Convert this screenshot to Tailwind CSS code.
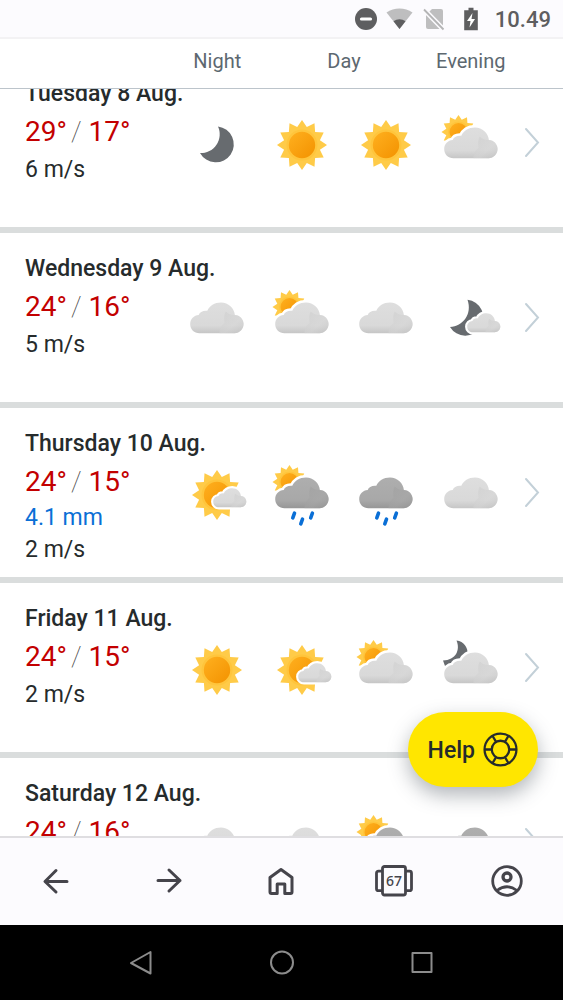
<!DOCTYPE html>
<html lang="en">
<head>
  <meta charset="UTF-8" />
  <meta name="viewport" content="width=device-width, initial-scale=1.0"/>
  <title>10 day forecast</title>
  <script src="https://cdn.jsdelivr.net/npm/@tailwindcss/browser@4"></script>
</head>
<body class="flex h-screen flex-col overflow-hidden bg-white font-[Roboto,sans-serif] text-[#262b2c]">

  <!-- shared weather symbols -->
  <svg class="absolute h-0 w-0" aria-hidden="true">
    <defs>
      <linearGradient id="sunFill" x1="0" y1="0" x2="1" y2="1">
        <stop offset="0" stop-color="#ffb01f"/>
        <stop offset="1" stop-color="#f39200"/>
      </linearGradient>
      <linearGradient id="lightFill" x1="0" y1="0" x2="0" y2="1">
        <stop offset="0" stop-color="#dedede"/>
        <stop offset="0.75" stop-color="#d9d9d9"/>
        <stop offset="1" stop-color="#c6c6c6"/>
      </linearGradient>
      <linearGradient id="lightShade" x1="0" y1="0" x2="1" y2="1">
        <stop offset="0" stop-color="#c9c9c9"/>
        <stop offset="0.6" stop-color="#d6d6d6"/>
        <stop offset="1" stop-color="#c2c2c2"/>
      </linearGradient>
      <linearGradient id="darkFill" x1="0" y1="0" x2="0" y2="1">
        <stop offset="0" stop-color="#aeaeae"/>
        <stop offset="0.75" stop-color="#a8a8a8"/>
        <stop offset="1" stop-color="#979797"/>
      </linearGradient>
      <linearGradient id="darkShade" x1="0" y1="0" x2="1" y2="1">
        <stop offset="0" stop-color="#9c9c9c"/>
        <stop offset="0.6" stop-color="#a6a6a6"/>
        <stop offset="1" stop-color="#939393"/>
      </linearGradient>

      <g id="sunShape">
        <path fill="#ffcb48" d="M0-25 4.8-17.9 12.5-21.7 13.1-13.1 21.7-12.5 17.9-4.8 25 0 17.9 4.8 21.7 12.5 13.1 13.1 12.5 21.7 4.8 17.9 0 25-4.8 17.9-12.5 21.7-13.1 13.1-21.7 12.5-17.9 4.8-25 0-17.9-4.8-21.7-12.5-13.1-13.1-12.5-21.7-4.8-17.9Z"/>
        <circle r="15.5" fill="#ffc53c"/>
        <circle r="13.2" fill="url(#sunFill)"/>
      </g>
      <path id="moonShape" fill="#676b6f" d="M33 15.5A18 18 0 1 1 15 42 18.7 18.7 0 0 0 33 15.5Z"/>
      <path id="cloudShape" d="M14.5 47.2C9.2 47.2 5.2 43.3 5.2 38.2 5.2 33 9 29.4 13.7 29.1 14.6 26.2 17.8 24.4 22.3 24.8 24.4 19.7 29.6 16.4 36 16.4 43.4 16.4 49.3 22 49.9 29 54.8 29.3 58.6 33.2 58.6 38.1 58.6 43.2 54.6 47.2 49.5 47.2Z"/>
      <path id="cloudSide" d="M34.5 47.2C34.5 43 36.5 38.5 39.6 37 38.8 32 39.2 28 40.8 25.6 44 28.6 47 29.2 49.9 29 54.8 29.3 58.6 33.2 58.6 38.1 58.6 43.2 54.6 47.2 49.5 47.2Z"/>
      <g id="lightCloud">
        <use href="#cloudShape" fill="url(#lightFill)"/>
        <use href="#cloudSide" fill="url(#lightShade)" opacity="0.5"/>
      </g>
      <g id="darkCloud">
        <use href="#cloudShape" fill="url(#darkFill)"/>
        <use href="#cloudSide" fill="url(#darkShade)" opacity="0.5"/>
      </g>
      <g id="smallCloud" transform="translate(25 17) scale(0.62)">
        <use href="#cloudShape" fill="#fff" stroke="#fff" stroke-width="7"/>
        <use href="#lightCloud"/>
      </g>
      <g id="cloudGap">
        <use href="#cloudShape" fill="#fff" stroke="#fff" stroke-width="5"/>
      </g>
      <g id="drops" stroke="#0a6fd6" stroke-width="3.6" stroke-linecap="round">
        <path d="M24.5 52.2 22.8 56.8M32.5 58.2 30.8 62.8M42.4 52.2 40.7 56.8"/>
      </g>

      <symbol id="clearDay" viewBox="0 0 64 68"><use href="#sunShape" x="32" y="34"/></symbol>
      <symbol id="clearNight" viewBox="0 0 64 68"><use href="#moonShape"/></symbol>
      <symbol id="cloudy" viewBox="0 0 64 68"><use href="#lightCloud"/></symbol>
      <symbol id="mostlyCloudyDay" viewBox="0 0 64 68">
        <use href="#sunShape" transform="translate(19.5 21) scale(0.68)"/>
        <use href="#cloudGap"/><use href="#lightCloud"/>
      </symbol>
      <symbol id="mostlyCloudyNight" viewBox="0 0 64 68">
        <path fill="#676b6f" d="M17.500 4.500C25 5.500 29 11.500 28.600 18L24 30H6L4 24.500C17 24 21.500 14 17.500 4.500Z"/>
        <use href="#cloudGap"/><use href="#lightCloud"/>
      </symbol>
      <symbol id="partlyCloudyDay" viewBox="0 0 64 68">
        <use href="#sunShape" x="32" y="34"/><use href="#smallCloud"/>
      </symbol>
      <symbol id="partlyCloudyNight" viewBox="0 0 64 68">
        <path fill="#676b6f" d="M28.500 13.800A18 18 0 1 1 11 41C24 40.500 33.500 28 28.500 13.800Z"/>
        <use href="#smallCloud"/>
      </symbol>
      <symbol id="rain" viewBox="0 0 64 68"><use href="#darkCloud"/><use href="#drops"/></symbol>
      <symbol id="rainShowers" viewBox="0 0 64 68">
        <use href="#sunShape" transform="translate(19.5 21) scale(0.68)"/>
        <use href="#cloudGap"/><use href="#darkCloud"/><use href="#drops"/>
      </symbol>
      <symbol id="chevron" viewBox="0 0 16 32"><path d="M2 2 14 15.500 2 29" fill="none" stroke="#c3d0d8" stroke-width="2" stroke-linecap="round"/></symbol>
    </defs>
  </svg>

  <!-- status bar -->
  <div class="flex h-[39px] shrink-0 items-center justify-end border-b-2 border-[#f3f2f4] bg-[#fcfbfe] pr-3 text-[#5e5e60]">
    <svg class="mr-2 h-6 w-6" viewBox="0 0 24 24"><circle cx="12" cy="12" r="11" fill="currentColor"/><path d="M7.5 12h9" stroke="#fff" stroke-width="3.2" stroke-linecap="round"/></svg>
    <svg class="mr-2.5 h-6 w-[27px]" viewBox="0 0 27 24"><path d="M.5 5.5C8 0 19 0 26.500 5.500L13.500 22Z" fill="#bebebf"/><path d="M7.500 14.300C11 11.600 16 11.600 19.500 14.300L13.500 22Z" fill="currentColor"/></svg>
    <svg class="mr-[18px] h-6 w-[22px]" viewBox="0 0 22 24"><path d="M9 2h9q2 0 2 2v18H5q-2 0-2-2V8Z" fill="#bebebf"/><path d="M0 1.500 21 23" stroke="#fcfbfe" stroke-width="5"/><path d="M1 2.500 20.500 22.500" stroke="#b4b4b5" stroke-width="1.800"/></svg>
    <svg class="mr-4 h-6 w-4" viewBox="0 0 16 24"><path d="M5.500.8h5v2.400h4.300V23.200H1.200V3.200h4.300Z" fill="currentColor"/><path d="M9.500 6 4 14h3.500l-1 6.500L12 12H8.500Z" fill="#fff"/></svg>
    <span class="pt-0.5 text-[22px] leading-7 font-medium">10.49</span>
  </div>

  <!-- column titles -->
  <header class="grid h-[50px] shrink-0 grid-cols-[175px_1fr_50px] items-center border-b border-[#bcc4cb] pb-1.5 text-[20px] text-[#5d6870]">
    <div class="col-start-2 grid grid-cols-4 text-center">
      <span>Night</span>
      <span class="col-span-2">Day</span>
      <span>Evening</span>
    </div>
  </header>

  <main class="relative min-h-0 flex-1 overflow-hidden">
    <div class="-mt-[31px] flex flex-col gap-1.5 bg-[#dadddd]">

      <article class="grid min-h-[169px] grid-cols-[175px_1fr_50px] items-center bg-white">
        <div class="self-start pt-[22px] pl-[25px] text-[23px] leading-8 whitespace-nowrap">
          <h2 class="leading-7 font-medium">Tuesday 8 Aug.</h2>
          <p class="mt-1 text-[28px] leading-10 text-[#c30000]">29°<span class="ml-1 font-thin text-[#444]">/</span> 17°</p>
          <p class="mt-0.5">6 m/s</p>
        </div>
        <div class="grid grid-cols-4 justify-items-center pt-1">
          <svg class="h-[68px] w-16" role="img" aria-label="Clear"><use href="#clearNight"/></svg>
          <svg class="h-[68px] w-16" role="img" aria-label="Sunny"><use href="#clearDay"/></svg>
          <svg class="h-[68px] w-16" role="img" aria-label="Sunny"><use href="#clearDay"/></svg>
          <svg class="h-[68px] w-16" role="img" aria-label="Mostly cloudy"><use href="#mostlyCloudyDay"/></svg>
        </div>
        <button class="flex h-full items-center pl-[11px]" aria-label="Open Tuesday"><svg class="h-8 w-4"><use href="#chevron"/></svg></button>
      </article>

      <article class="grid min-h-[169px] grid-cols-[175px_1fr_50px] items-center bg-white">
        <div class="self-start pt-[22px] pl-[25px] text-[23px] leading-8 whitespace-nowrap">
          <h2 class="leading-7 font-medium">Wednesday 9 Aug.</h2>
          <p class="mt-1 text-[28px] leading-10 text-[#c30000]">24°<span class="ml-1 font-thin text-[#444]">/</span> 16°</p>
          <p class="mt-0.5">5 m/s</p>
        </div>
        <div class="grid grid-cols-4 justify-items-center pt-1">
          <svg class="h-[68px] w-16" role="img" aria-label="Cloudy"><use href="#cloudy"/></svg>
          <svg class="h-[68px] w-16" role="img" aria-label="Mostly cloudy"><use href="#mostlyCloudyDay"/></svg>
          <svg class="h-[68px] w-16" role="img" aria-label="Cloudy"><use href="#cloudy"/></svg>
          <svg class="h-[68px] w-16" role="img" aria-label="Partly cloudy"><use href="#partlyCloudyNight"/></svg>
        </div>
        <button class="flex h-full items-center pl-[11px]" aria-label="Open Wednesday"><svg class="h-8 w-4"><use href="#chevron"/></svg></button>
      </article>

      <article class="grid min-h-[169px] grid-cols-[175px_1fr_50px] items-center bg-white">
        <div class="self-start pt-[22px] pl-[25px] text-[23px] leading-8 whitespace-nowrap">
          <h2 class="leading-7 font-medium">Thursday 10 Aug.</h2>
          <p class="mt-1 text-[28px] leading-10 text-[#c30000]">24°<span class="ml-1 font-thin text-[#444]">/</span> 15°</p>
          <p class="text-[#0a6fd6]">4.1 mm</p>
          <p>2 m/s</p>
        </div>
        <div class="grid grid-cols-4 justify-items-center pt-1">
          <svg class="h-[68px] w-16" role="img" aria-label="Partly cloudy"><use href="#partlyCloudyDay"/></svg>
          <svg class="h-[68px] w-16" role="img" aria-label="Rain showers"><use href="#rainShowers"/></svg>
          <svg class="h-[68px] w-16" role="img" aria-label="Rain"><use href="#rain"/></svg>
          <svg class="h-[68px] w-16" role="img" aria-label="Cloudy"><use href="#cloudy"/></svg>
        </div>
        <button class="flex h-full items-center pl-[11px]" aria-label="Open Thursday"><svg class="h-8 w-4"><use href="#chevron"/></svg></button>
      </article>

      <article class="grid min-h-[169px] grid-cols-[175px_1fr_50px] items-center bg-white">
        <div class="self-start pt-[22px] pl-[25px] text-[23px] leading-8 whitespace-nowrap">
          <h2 class="leading-7 font-medium">Friday 11 Aug.</h2>
          <p class="mt-1 text-[28px] leading-10 text-[#c30000]">24°<span class="ml-1 font-thin text-[#444]">/</span> 15°</p>
          <p class="mt-0.5">2 m/s</p>
        </div>
        <div class="grid grid-cols-4 justify-items-center pt-1">
          <svg class="h-[68px] w-16" role="img" aria-label="Sunny"><use href="#clearDay"/></svg>
          <svg class="h-[68px] w-16" role="img" aria-label="Partly cloudy"><use href="#partlyCloudyDay"/></svg>
          <svg class="h-[68px] w-16" role="img" aria-label="Mostly cloudy"><use href="#mostlyCloudyDay"/></svg>
          <svg class="h-[68px] w-16" role="img" aria-label="Mostly cloudy"><use href="#mostlyCloudyNight"/></svg>
        </div>
        <button class="flex h-full items-center pl-[11px]" aria-label="Open Friday"><svg class="h-8 w-4"><use href="#chevron"/></svg></button>
      </article>

      <article class="grid min-h-[169px] grid-cols-[175px_1fr_50px] items-center bg-white">
        <div class="self-start pt-[22px] pl-[25px] text-[23px] leading-8 whitespace-nowrap">
          <h2 class="leading-7 font-medium">Saturday 12 Aug.</h2>
          <p class="mt-1 text-[28px] leading-10 text-[#c30000]">24°<span class="ml-1 font-thin text-[#444]">/</span> 16°</p>
        </div>
        <div class="grid grid-cols-4 justify-items-center pt-1">
          <svg class="h-[68px] w-16" role="img" aria-label="Cloudy"><use href="#cloudy"/></svg>
          <svg class="h-[68px] w-16" role="img" aria-label="Cloudy"><use href="#cloudy"/></svg>
          <svg class="h-[68px] w-16" role="img" aria-label="Rain showers"><use href="#rainShowers"/></svg>
          <svg class="h-[68px] w-16" role="img" aria-label="Rain"><use href="#rain"/></svg>
        </div>
        <button class="flex h-full items-center pl-[11px]" aria-label="Open Saturday"><svg class="h-8 w-4"><use href="#chevron"/></svg></button>
      </article>
    </div>

    <button class="absolute right-[25px] bottom-[49px] flex h-[75px] items-center gap-2 rounded-full bg-[#ffe600] pr-5 pl-5 text-[23px] font-medium shadow-[0_8px_20px_rgba(60,70,80,0.4)]">
      <span class="pt-1">Help</span>
      <svg class="h-[35px] w-[35px]" viewBox="0 0 34 34" fill="none" stroke="currentColor" stroke-width="2.200">
        <circle cx="17" cy="17" r="15.500"/>
        <circle cx="17" cy="17" r="8.500"/>
        <path d="M1.500 17h7M25.500 17h7M12.700 9.600 9.200 3.600M21.300 9.600 24.800 3.600M12.700 24.400 9.200 30.400M21.300 24.400 24.800 30.400"/>
      </svg>
    </button>
  </main>

  <!-- browser toolbar -->
  <nav class="grid h-[89px] shrink-0 grid-cols-5 border-t-2 border-[#dfdee1] bg-[#fcfbfe] pb-0.5 text-[#45444b]">
    <button class="flex items-center justify-center" aria-label="Back">
      <svg class="h-8 w-8" viewBox="0 0 32 32" fill="none" stroke="currentColor" stroke-width="3" stroke-linecap="round" stroke-linejoin="round"><path d="M27 16.500H5.500M16 5.500 5 16.500l11 10.500"/></svg>
    </button>
    <button class="flex items-center justify-center" aria-label="Forward">
      <svg class="h-8 w-8" viewBox="0 0 32 32" fill="none" stroke="currentColor" stroke-width="3" stroke-linecap="round" stroke-linejoin="round"><path d="M5 15.500H27M16 5l11 10.500-11 10.500"/></svg>
    </button>
    <button class="flex items-center justify-center" aria-label="Home">
      <svg class="h-8 w-8" viewBox="0 0 32 32" fill="none" stroke="currentColor" stroke-width="3" stroke-linejoin="round"><path d="M5 12.500 16 4.500l11 8V27q0 1.500-1.500 1.500H19.800V19h-7.600v9.500H6.500Q5 28.500 5 27Z"/></svg>
    </button>
    <button class="flex items-center justify-center" aria-label="Tabs">
      <span class="relative flex items-center justify-center">
        <svg class="h-8 w-[38px]" viewBox="0 0 38 32" fill="none" stroke="currentColor" stroke-width="2.800"><rect x="7.500" y="1.500" width="23" height="28.500" rx="2"/><path d="M7.500 6.200H3.500q-2 0-2 2v15.500q0 2 2 2H7.500M30.500 6.200H34.500q2 0 2 2v15.500q0 2-2 2H30.500"/></svg>
        <span class="absolute font-['Noto_Sans',sans-serif] text-[14px] font-medium">67</span>
      </span>
    </button>
    <button class="flex items-center justify-center" aria-label="Account">
      <svg class="h-8 w-8" viewBox="0 0 32 32" fill="none" stroke="currentColor" stroke-width="2.800"><circle cx="16" cy="16" r="14.300"/><circle cx="16" cy="12" r="4" stroke-width="3.300"/><path d="M6 25.500Q16 18 26 25.500"/></svg>
    </button>
  </nav>

  <!-- system keys -->
  <div class="grid h-[75px] shrink-0 grid-cols-3 bg-black px-[12.5%] text-[#8c8c8c]">
    <button class="flex items-center justify-center" aria-label="System back"><svg class="h-7 w-7" viewBox="0 0 28 28" fill="none" stroke="currentColor" stroke-width="2" stroke-linejoin="round"><path d="M23.500 3v21.500L4 14Z"/></svg></button>
    <button class="flex items-center justify-center" aria-label="System home"><svg class="h-7 w-7" viewBox="0 0 28 28" fill="none" stroke="currentColor" stroke-width="2"><circle cx="14" cy="13.500" r="11"/></svg></button>
    <button class="flex items-center justify-center" aria-label="Recent apps"><svg class="h-7 w-7" viewBox="0 0 28 28" fill="none" stroke="currentColor" stroke-width="2" stroke-linejoin="round"><rect x="4.500" y="4" width="19" height="19"/></svg></button>
  </div>
</body>
</html>
